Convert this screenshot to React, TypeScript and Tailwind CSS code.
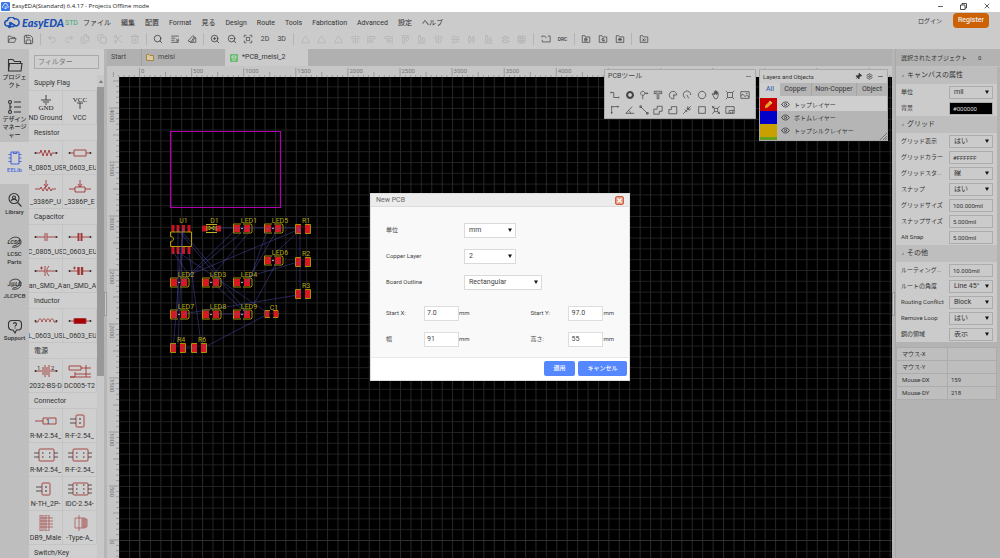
import React from "react";
import {
  AlignCenterHorizontal,
  AlignCenterVertical,
  AlignEndHorizontal,
  AlignEndVertical,
  AlignHorizontalDistributeCenter,
  AlignStartHorizontal,
  AlignStartVertical,
  AlignVerticalDistributeCenter,
  Copy,
  Eye,
  Files,
  Grid3x3,
  Minus,
  Pin,
  Redo2,
  Save,
  Scissors,
  Search,
  Settings,
  Trash2,
  Triangle,
  Undo2,
  X,
  ZoomIn,
  ZoomOut,
} from "lucide-react";

/* ---------- data ---------- */

const MENUS = ["ファイル", "編集", "配置", "Format", "見る", "Design", "Route", "Tools", "Fabrication", "Advanced", "設定", "ヘルプ"];

const PATHS = {
  open: "M3 20V5h6l2 3h8v3M3 20h15l4-9H7z",
  list: "M3 5h18M3 10h9M3 15h8M3 20h18M14 11l6 6M20 11v6h-6",
  theme: "M3 16L14 4l7 5v11H9zM9 20l8-13M13 20l6-12M3 16l6 4",
  fit: "M3 8V3h5M16 3h5v5M21 16v5h-5M8 21H3v-5M8 8h8v8H8z",
  route: "M2 8V5h7l4 5M22 5v14H3v-5M16 5h6",
  fileB: "M3 20V4h6l2 3h10v13zM9 10h5v7H9zM9 13h6",
  fileG: "M3 20V4h6l2 3h10v13zM15 11l-3-1-3 3 3 4 3-1v-2M10 10l5 7",
  fileA: "M3 20V4h6l2 3h10v13zM7 13h10M12 9v8M9 10l6 6M15 10l-6 6",
  fileD: "M3 20V4h6l2 3h10v13zM8 11l8 6M8 16h3v-4M14 11l3 3",
  track: "M2 6h7v12h12M2 4v4M21 16v4",
  via: "M12 5a7 7 0 1 0 .1 0z",
  pad: "M9 3a5 5 0 1 0 .1 0zM9 13v9M14 8h8M19 6v4",
  text: "M3 3h18v6h-3V7h-4v14h-4V7H6v2H3z",
  arcA: "M12 12h9a9 9 0 1 0-7 9v-9",
  arcB: "M5 17a9 9 0 1 1 16-5M12 12l4 8M5 17l3 3",
  circle: "M12 3a9 9 0 1 0 .1 0z",
  hand: "M5 13L3 9l2-1 3 4V4h2v6V2h2v8V3h2v8l1-6 2 1v9l-3 6H9z",
  dimension: "M6 6h12v12H6zM2 2l4 4M22 2l-4 4M2 22l4-4M22 22l-4-4",
  image: "M2 4h20v16H2zM2 14l5-4 5 6 4-4 6 5M14 8h4",
  origin: "M4 22V4h18M4 2v4M18 2v4M2 18h4",
  angle: "M22 20H2L17 4M9 13a9 9 0 0 1 4 7",
  link: "M4 4l16 16M2 2h4v4H2zM18 18h4v4h-4z",
  copper: "M2 10h8V3h12v12h-7v7H2z",
  solid: "M2 21V11h6V4h13v17z",
  rat: "M3 21l18-18M7 11l6 6M11 7l6 6M14 3v7h7",
  square: "M4 4h16v16H4z",
  group: "M3 3l6 6M21 3l-6 6M3 21l6-6M21 21l-6-6M8 8h8v8H8zM4 8V4h4M20 16v4h-4",
  panel: "M2 4h20v16H2zM10 13h12M10 13v7M14 17v3M18 15v5",
};

type GlyphName = keyof typeof PATHS;

const PCB_TOOLS: GlyphName[] = [
  "track", "via", "pad", "text", "arcA", "arcB", "circle", "hand", "dimension", "image",
  "origin", "angle", "link", "copper", "solid", "rat", "square", "group", "panel",
];

const LIBRARY = [
  { title: "Supply Flag", items: [["gnd", "ND Ground"], ["vcc", "VCC"]] },
  { title: "Resistor", items: [["resUS", "R_0805_US"], ["resEU", "R_0603_EU"], ["potUS", "_3386P_U"], ["potEU", "_3386P_E"]] },
  { title: "Capacitor", items: [["cap", "C_0805_US"], ["capEU", "C_0603_EU"], ["polUS", "an_SMD_A"], ["polEU", "an_SMD_A"]] },
  { title: "Inductor", items: [["indUS", "L_0603_US"], ["indEU", "L_0603_EU"]] },
  { title: "電源", items: [["battery", "2032-BS-D"], ["jack", "DC005-T2"]] },
  {
    title: "Connector",
    items: [
      ["pin", "R-M-2.54_"], ["two", "R-F-2.54_"], ["four", "R-M-2.54_"], ["four", "R-F-2.54_"],
      ["two", "N-TH_2P-"], ["six", "IDC-2.54-"], ["db9", "DB9_Male"], ["usb", "-Type-A_"],
    ],
  },
  { title: "Switch/Key", items: [] },
];

const MODULES = [
  ["project", "プロジェクト"],
  ["design", "デザインマネージャー"],
  ["eelib", "EELib"],
  ["library", "Library"],
  ["lcsc", "LCSC Parts"],
  ["jlc", "JLCPCB"],
  ["support", "Support"],
];

const PROPS = [
  {
    title: "キャンバスの属性",
    rows: [["単位", "mil", "select"], ["背景", "#000000", "dark"]],
  },
  {
    title: "グリッド",
    rows: [
      ["グリッド表示", "はい", "select"],
      ["グリッドカラー", "#FFFFFF", "input"],
      ["グリッドスタ...", "線", "select"],
      ["スナップ", "はい", "select"],
      ["グリッドサイズ", "100.000mil", "input"],
      ["スナップサイズ", "5.000mil", "input"],
      ["Alt Snap", "5.000mil", "input"],
    ],
  },
  {
    title: "その他",
    rows: [
      ["ルーティング...", "10.000mil", "input"],
      ["ルートの角度", "Line 45°", "select"],
      ["Routing Conflict", "Block", "select"],
      ["Remove Loop", "はい", "select"],
      ["銅の領域", "表示", "select"],
    ],
  },
];

/* ---------- small parts ---------- */

function Glyph({ name, size = 10, bold = false }: { name: GlyphName; size?: number; bold?: boolean }) {
  return (
    <svg width={size} height={size} viewBox="0 0 24 24" fill="none" stroke="currentColor" strokeWidth={bold ? 5 : 1.8} aria-hidden="true">
      <path d={PATHS[name]} />
    </svg>
  );
}

function Select({ id, value, className = "" }: { id: string; value: string; className?: string }) {
  return (
    <span className={`relative block ${className}`}>
      <select id={id} defaultValue={value} className="block h-full w-full appearance-none border border-current/20 bg-transparent pl-1 text-[7px] leading-none">
        <option>{value}</option>
      </select>
      <svg className="pointer-events-none absolute top-1/2 right-1 -translate-y-1/2" width="4" height="4" viewBox="0 0 4 4">
        <path d="M0 0.5h4L2 4z" fill="#111" />
      </svg>
    </span>
  );
}

/* ---------- header ---------- */

function TitleBar() {
  return (
    <div className="flex h-3 items-center bg-white pl-px text-[6px] text-[#222]">
      <svg width="9" height="9" viewBox="0 0 18 18">
        <rect width="18" height="18" rx="2" fill="#3b78e7" />
        <path d="M4 12a3 3 0 0 1 1-5 4 4 0 0 1 8 0 3 3 0 0 1 0 5M7 10h5M7 13h4" stroke="#fff" strokeWidth="1.6" fill="none" />
      </svg>
      <h1 className="ml-0.5 font-['Open_Sans']">EasyEDA(Standard) 6.4.17 - Projects Offline mode</h1>
      <div className="ml-auto flex items-center gap-4 pr-[9px]">
        <button aria-label="Minimize"><Minus size={7} strokeWidth={2.5} /></button>
        <button aria-label="Restore">
          <svg width="7" height="7" viewBox="0 0 14 14" fill="none" stroke="#222" strokeWidth="1.6"><path d="M1 4h9v9H1zM4 4V1h9v9h-3" /></svg>
        </button>
        <button aria-label="Close"><X size={8} strokeWidth={2.2} /></button>
      </div>
    </div>
  );
}

function Logo() {
  return (
    <a href="#home" className="flex w-[79px] shrink-0 items-center pl-1" aria-label="EasyEDA STD">
      <svg width="16" height="12" viewBox="0 0 32 24" fill="none" stroke="#1a4fb4" strokeWidth="3">
        <path d="M9 18H7a5.5 5.5 0 0 1 0-11 7.5 7.5 0 0 1 14-3 7 7 0 0 1 4 14c-5 0-6-5-10-5" />
        <circle cx="13" cy="13" r="2" />
        <circle cx="11" cy="19" r="2" />
        <path d="M13 19h6l3-3" />
      </svg>
      <span className="ml-0.5 pb-0.5 font-['Lato'] text-[11px] leading-none font-black text-[#1a4fb4] italic">EasyEDA</span>
      <span className="ml-px text-[7px] text-[#3da672]">STD</span>
    </a>
  );
}

function ToolGroup({ className, muted = false, children }: { className: string; muted?: boolean; children: React.ReactNode }) {
  return (
    <div className={`flex ${className} ${muted ? "text-[#b2b2b2]" : "text-[#444]"}`}>
      {React.Children.map(children, (child) => (
        <button className="flex flex-1 items-center justify-center">{child}</button>
      ))}
    </div>
  );
}

function Separator() {
  return <div className="flex w-[7px] justify-center"><span className="h-full w-px bg-[#b4b4b4]" /></div>;
}

function Header() {
  return (
    <header className="flex h-[37px] items-start justify-between bg-[#cbcbcb] pt-px text-[#333]">
      <div>
        <div className="flex h-5 items-center">
          <Logo />
          <nav className="flex gap-[10px] pl-1 text-[7px] whitespace-nowrap">
            {MENUS.map((menu) => (
              <button key={menu}>{menu}</button>
            ))}
          </nav>
        </div>
        <div className="flex h-3 pl-[3px]">
          <ToolGroup className="w-[34px]">
            <Glyph name="open" />
            <Save size={11} strokeWidth={1.8} />
          </ToolGroup>
          <Separator />
          <ToolGroup className="w-[99px]" muted>
            <Undo2 size={10} />
            <Redo2 size={10} />
            <Files size={10} />
            <Copy size={10} />
            <Scissors size={10} />
            <Trash2 size={10} />
          </ToolGroup>
          <Separator />
          <ToolGroup className="w-[50px]">
            <Search size={10} />
            <Glyph name="list" />
            <Glyph name="theme" />
          </ToolGroup>
          <Separator />
          <ToolGroup className="w-[83px]">
            <ZoomIn size={10} />
            <ZoomOut size={10} />
            <Glyph name="fit" />
            <span className="text-[7px]">2D</span>
            <span className="text-[7px]">3D</span>
          </ToolGroup>
          <Separator />
          <ToolGroup className="w-[233px]" muted>
            <Triangle size={9} />
            <Triangle size={9} />
            <Triangle size={9} />
            <AlignCenterVertical size={9} />
            <AlignStartVertical size={9} />
            <AlignEndVertical size={9} />
            <AlignStartHorizontal size={9} />
            <AlignEndHorizontal size={9} />
            <AlignCenterVertical size={9} />
            <AlignCenterHorizontal size={9} />
            <AlignHorizontalDistributeCenter size={9} />
            <AlignEndHorizontal size={9} />
            <AlignVerticalDistributeCenter size={9} />
            <Grid3x3 size={9} />
          </ToolGroup>
          <Separator />
          <ToolGroup className="w-[34px]">
            <Glyph name="route" />
            <span className="text-[5px] font-medium">DRC</span>
          </ToolGroup>
          <Separator />
          <ToolGroup className="w-[50px]">
            <Glyph name="fileB" />
            <Glyph name="fileG" />
            <Glyph name="fileA" />
          </ToolGroup>
          <Separator />
          <ToolGroup className="w-[17px]">
            <Glyph name="fileD" />
          </ToolGroup>
        </div>
      </div>
      <div className="flex items-center gap-[11px] pr-[11px] text-[6px]">
        <a href="#login">ログイン</a>
        <a href="#register" className="flex h-[15px] items-center rounded-sm bg-[#cc6105] px-[5px] text-[7px] font-medium text-[#eee]">Register</a>
      </div>
    </header>
  );
}

/* ---------- left side ---------- */

function ModuleIcon({ name }: { name: string }) {
  const common = { width: 16, height: 16, viewBox: "0 0 32 32", fill: "none", stroke: "currentColor", strokeWidth: 2.2 };
  switch (name) {
    case "project":
      return <svg {...common}><path d="M3 28V5h9l3 4h12v4M3 28h25l2-15H5z" /></svg>;
    case "design":
      return <svg {...common}><circle cx="6" cy="6" r="3" /><circle cx="6" cy="26" r="3" /><path d="M6 9v14M6 16h4M14 6h14M14 16h14M14 26h14" /></svg>;
    case "eelib":
      return <svg {...common}><rect x="8" y="4" width="16" height="24" rx="1" /><path d="M8 9H3M8 16H3M8 23H3M29 9h-5M29 16h-5M29 23h-5M13 4v3h6V4" /></svg>;
    case "library":
      return <svg {...common}><circle cx="14" cy="13" r="10" /><circle cx="14" cy="11" r="3" /><path d="M8 18c2-5 10-5 12 0M21 21l8 8" /></svg>;
    case "support":
      return <svg {...common}><path d="M16 30l-4-6h-3a7 7 0 0 1-6-7v-5a7 7 0 0 1 7-7h12a7 7 0 0 1 7 7v5a7 7 0 0 1-7 7h-3z" /><path d="M13 12a3 3 0 1 1 4 3l-1 2M16 19v2" /></svg>;
    default:
      return (
        <svg {...common} strokeWidth="1.8">
          <path d="M5 12C12 3 27 5 28 15c1 8-8 13-18 11M24 9c5 7-2 14-12 15" />
          <text x="1" y="20" fontSize="11" fontStyle="italic" fontWeight="bold" fill="currentColor" stroke="none">{name === "lcsc" ? "LCSC" : "J@LC"}</text>
        </svg>
      );
  }
}

function ModuleBar() {
  return (
    <nav className="w-[29px] shrink-0 bg-[#bebebe]">
      {MODULES.map(([name, label]) => (
        <button
          key={name}
          className={`flex w-full flex-col items-center pt-2 text-center text-[6px] leading-2 font-medium ${name === "design" ? "h-[51px]" : "h-[42px]"} ${
            name === "eelib" ? "bg-[#cfcfcf] text-[#4a68d8]" : "text-[#333]"
          }`}
        >
          <ModuleIcon name={name} />
          <span className="w-full">{label}</span>
        </button>
      ))}
    </nav>
  );
}

function Leads() {
  return (
    <g fill="#333" stroke="none">
      <circle cx="1.5" cy="8" r="1" />
      <circle cx="22.5" cy="8" r="1" />
    </g>
  );
}

function BoxPart({ rows, both = false }: { rows: number; both?: boolean }) {
  const ys = rows === 2 ? [6, 10] : [4, 8, 12];
  return (
    <>
      <rect x={both ? 5 : 8} y="2" width={both ? 15 : 8} height="12" rx="1" />
      {ys.map((y) => (
        <g key={y} stroke="#333" strokeWidth="0.8">
          <path d={both ? `M0 ${y}h5M20 ${y}h5` : `M2 ${y}h6`} />
          <path d={both ? `M8 ${y}h1.5M15 ${y}h1.5` : `M11 ${y}h2`} strokeWidth="1.2" />
        </g>
      ))}
    </>
  );
}

function PartSymbol({ name }: { name: string }) {
  const body = {
    gnd: <g stroke="#333"><path d="M12 0v5M7 5h10M9 7h6M11 9h2" /><text x="12" y="15" fontSize="7" textAnchor="middle" fill="#222" stroke="none" fontFamily="Liberation Serif">GND</text></g>,
    vcc: <g stroke="#333"><text x="12" y="7" fontSize="7" textAnchor="middle" fill="#222" stroke="none" fontFamily="Liberation Serif">VCC</text><path d="M9 8h6M12 8v6" /></g>,
    resUS: <><path d="M1 8h5l1-3 2 6 2-6 2 6 2-6 2 6 1-3h4" /><Leads /></>,
    resEU: <><path d="M1 8h5M18 8h5M6 5h12v6H6z" /><Leads /></>,
    potUS: <><path d="M1 10h5l1-2 2 4 2-4 2 4 2-4 2 4 1-2h4M12 1v7M10 5l2 3 2-3" /></>,
    potEU: <><path d="M1 10h6M17 10h6M7 8h10v5H7zM12 1v7M10 5l2 3 2-3" /></>,
    cap: <><path d="M1 8h10M13 8h10M11 4v8M13 4v8" /><Leads /></>,
    capEU: <><path d="M1 8h9M14 8h9" /><path d="M10.5 4v8M13.5 4v8" strokeWidth="2" /><Leads /></>,
    polUS: <><path d="M1 8h10M13 8h10M11 3v10M15 3c-3 3-3 7 0 10M6 5h3M7.5 3.5v3" /><Leads /></>,
    polEU: <><path d="M1 8h9M15 8h8M5 5h3M6.5 3.5v3" /><path d="M10.5 4v8M14 4v8" strokeWidth="2.4" /><Leads /></>,
    indUS: <><path d="M1 9h3c0-4 4-4 4 0 0-4 4-4 4 0 0-4 4-4 4 0 0-4 4-4 4 0h3" /><Leads /></>,
    indEU: <><path d="M1 8h22" /><path d="M6 5.5h12v5H6z" fill="#a00" /><Leads /></>,
    battery: <><path d="M1 8h7M16 8h7M9 4v8M11 2v12M13 4v8M15 2v12" /><text x="3" y="7" fontSize="6" fill="#333" stroke="none">1</text><text x="17" y="7" fontSize="6" fill="#333" stroke="none">2</text><Leads /></>,
    jack: <><path d="M1 3h12v4H1zM13 5h10M7 9v5H2M7 11h16M2 14h21M18 2v12" /></>,
    pin: <><path d="M1 8h8M9 5h13v6H9z" /><text x="12" y="10.5" fontSize="7" fill="#222" stroke="none">1</text></>,
    two: <BoxPart rows={2} />,
    four: <BoxPart rows={2} both />,
    six: <BoxPart rows={3} both />,
    db9: <g strokeWidth="0.6"><path d="M6 0h9v16H6zM8 0v16M10 1v14M12 0v16M6 3h13M6 6h13M6 9h13M6 12h13" /></g>,
    usb: <g strokeWidth="0.6"><path d="M7 3h10v10H7zM11 0v16M13 4h6v8h-6M13 6h6M13 8h6M13 10h6M15 4v8" /></g>,
  }[name];
  return (
    <svg width="24" height="16" viewBox="0 0 24 16" fill="none" stroke="#a03838" strokeWidth="0.9" className="shrink-0">
      {body}
    </svg>
  );
}

function LibraryPanel() {
  return (
    <aside className="flex w-[75px] shrink-0 flex-col bg-[#cfcfcf] text-[7px] text-[#333]">
      <div className="h-[26px] shrink-0 px-[5px] pt-[6px]">
        <input aria-label="フィルター" placeholder="フィルター" className="block h-[14px] w-full border border-[#aaa] px-[3px] text-[7px] placeholder:text-[#777]" />
      </div>
      <div className="flex min-h-0 flex-1 overflow-hidden">
        <div className="min-w-0 flex-1">
          {LIBRARY.map((section) => (
            <section key={section.title}>
              <h2 className="h-4 border-b border-[#c4c4c4] pl-[5px] leading-4">{section.title}</h2>
              <ul className="grid grid-cols-2">
                {section.items.map(([symbol, label], i) => (
                  <li key={i} className="flex h-[34px] flex-col items-center overflow-hidden border-r border-b border-[#c4c4c4] pt-1 leading-[14px] whitespace-nowrap">
                    <PartSymbol name={symbol} />
                    {label}
                  </li>
                ))}
              </ul>
            </section>
          ))}
        </div>
        <div className="flex w-[7px] flex-col items-center bg-[#c8c8c8]">
          <span className="flex h-3 items-center">
            <svg width="4" height="3" viewBox="0 0 4 3"><path d="M0 3l2-3 2 3z" fill="#777" /></svg>
          </span>
          <span className="h-[289px] w-full bg-[#989898]" />
        </div>
      </div>
    </aside>
  );
}

function Splitter() {
  return (
    <div className="flex w-[3px] shrink-0 items-center justify-center bg-[#b6b6b6]">
      <span className="h-6 w-full border border-[#999] bg-[#ccc]" />
    </div>
  );
}

/* ---------- editor ---------- */

const GRID_X = 52.1;
const GRID_Y = 54;

function TopRuler() {
  return (
    <svg className="block h-[11px] w-full bg-[#c6c6c6]" stroke="#888" strokeWidth="0.7">
      {Array.from({ length: 160 }, (_, i) => {
        const x = 32.5 + (i - 5) * (GRID_X / 10);
        const major = (i - 5) % 10 === 0;
        return <path key={i} d={`M${x} 11V${major ? 2 : (i - 5) % 5 === 0 ? 6 : 9}`} />;
      })}
      {Array.from({ length: 16 }, (_, i) => (
        <text key={i} x={34 + i * GRID_X} y="7" fontSize="6" fill="#777" stroke="none">{i * 500}</text>
      ))}
    </svg>
  );
}

function SideRuler() {
  return (
    <svg className="block h-full w-3 shrink-0 bg-[#c6c6c6]" stroke="#888" strokeWidth="0.7">
      {Array.from({ length: 92 }, (_, i) => {
        const step = 86 - i;
        const y = 463 - step * (GRID_Y / 10);
        return <path key={i} d={`M12 ${y}H${step % 10 === 0 ? 2 : step % 5 === 0 ? 6 : 9}`} />;
      })}
      {Array.from({ length: 9 }, (_, i) => (
        <text key={i} transform={`translate(3 ${464 - i * GRID_Y}) rotate(90)`} fontSize="6" fill="#777" stroke="none">{i * 500}</text>
      ))}
    </svg>
  );
}

const LEDS = [
  ["LED1", 242, 228], ["LED5", 273, 228], ["LED6", 273, 260], ["LED2", 179, 282], ["LED3", 211, 282],
  ["LED4", 242, 282], ["LED7", 179, 314], ["LED8", 211, 314], ["LED9", 242, 314],
] as const;

const RESISTORS = [["R1", 303, 229], ["R2", 303, 262], ["R3", 303, 294], ["R4", 178, 348], ["R6", 199, 348]] as const;

const NETS = [
  [189, 252, 201, 344], [178, 228, 178, 312], [183, 228, 178, 344], [178, 230, 247, 312], [183, 233, 220, 275],
  [178, 252, 268, 313], [173, 252, 189, 275], [247, 228, 182, 282], [237, 228, 189, 275], [300, 229, 189, 275],
  [250, 231, 212, 276], [212, 282, 247, 314], [278, 228, 247, 282], [268, 260, 300, 230], [278, 260, 253, 306],
  [298, 262, 247, 277], [298, 295, 183, 314], [268, 314, 203, 348], [212, 228, 300, 228], [300, 229, 300, 294],
  [215, 314, 247, 314], [181, 348, 196, 348], [173, 350, 183, 228], [268, 228, 249, 282],
];

function Board() {
  return (
    <svg className="block h-full min-w-0 flex-1 bg-black">
      <defs>
        <pattern id="grid" x="20.5" y="31" width={GRID_X / 5} height={GRID_Y / 5} patternUnits="userSpaceOnUse">
          <path d={`M0 .5H${GRID_X / 5}`} stroke="#202020" />
          <path d={`M.5 0V${GRID_Y / 5}`} stroke="#262626" />
        </pattern>
      </defs>
      <rect width="100%" height="100%" fill="url(#grid)" />
      <path d="M20.500 0V2000M0 463.500H3000" stroke="#303030" />
      <g transform="translate(-119 -77)" fontSize="7">
        <path d="M170.500 131.500h110v76h-110z" fill="none" stroke="#b000b0" strokeWidth="1.2" />

        <g fill="#c8141c">
          {[173, 178, 183.5, 189].map((x) => (
            <path key={x} d={`M${x - 1.5} 225h3v7h-3zM${x - 1.5} 247h3v7h-3z`} />
          ))}
          <path d="M202 225.500h5v6h-5zM216 225.500h5v6h-5z" />
        </g>
        <path d="M170.500 232h21v14.500h-21v-5c4 0 4-5 0-5z" fill="none" stroke="#b5a000" />
        <path d="M206 224.500h11M206 232.500h11M207 226v5M216 226v5M209 226l5 4M209 230l5-4M209 226v4M214 226v4" stroke="#c5b020" fill="none" />

        {LEDS.map(([name, x, y]) => (
          <g key={name}>
            <path d={`M${x - 1} ${y - 4}h-7.500v9h7.500M${x + 1} ${y - 4}h8l1 1v7l-1 1h-8`} fill="none" stroke="#a89200" />
            <path d={`M${x - 8} ${y - 3}h6v7h-6zM${x + 2} ${y - 3}h6v7h-6z`} fill="#d81820" />
            <circle cx={x} cy={y + 0.5} r="0.8" fill="#ddd" />
          </g>
        ))}
        {RESISTORS.map(([name, x, y]) => (
          <g key={name}>
            <path d={`M${x - 2} ${y - 4.5}h-5.500v9h5.500M${x + 2} ${y - 4.5}h5.500v9h-5.500`} fill="none" stroke="#a89200" />
            <path d={`M${x - 7} ${y - 4}h5v8h-5zM${x + 2} ${y - 4}h5v8h-5z`} fill="#d81820" />
          </g>
        ))}
        <path d="M270 310.500h-5v7h5M273 310.500h5v7h-5" fill="none" stroke="#a89200" />
        <path d="M265 311h4.500v6h-4.500zM273.500 311h4.500v6h-4.500z" fill="#d81820" />

        <g stroke="#5a5ad0" strokeOpacity="0.45" strokeWidth="0.9">
          {NETS.map(([x1, y1, x2, y2], i) => (
            <path key={i} d={`M${x1} ${y1}L${x2} ${y2}`} />
          ))}
        </g>

        <g fill="#b5ac12" textAnchor="middle">
          <text x="183.500" y="223">U1</text>
          <text x="214.500" y="223">D1</text>
          <text x="274" y="310">C1</text>
          {LEDS.map(([name, x, y]) => <text key={name} x={x + 7} y={y - 5}>{name}</text>)}
          {RESISTORS.map(([name, x, y]) => <text key={name} x={x + 3} y={y - 6}>{name}</text>)}
        </g>
      </g>
    </svg>
  );
}

function PcbTools() {
  return (
    <section className="absolute top-5 right-[136px] h-[50px] w-[152px] border border-[#aaa] bg-[#cbcbcb] text-[#444]">
      <header className="flex h-3 items-center justify-between px-[3px] text-[7px]">
        <h2>PCBツール</h2>
        <button aria-label="Collapse"><Minus size={7} /></button>
      </header>
      <div className="grid grid-cols-10 px-[3px] pt-[5px]">
        {PCB_TOOLS.map((tool) => (
          <button key={tool} aria-label={tool} className="flex h-[15px] items-center justify-center">
            <Glyph name={tool} bold={tool === "via"} />
          </button>
        ))}
      </div>
    </section>
  );
}

function LayersPanel() {
  return (
    <section className="absolute top-5 right-1 w-[129px] border border-[#aaa] bg-[#b5b5b5] text-[#333]">
      <header className="flex h-[13px] items-center gap-1 bg-[#cbcbcb] px-[3px] text-[6px]">
        <h2 className="mr-auto">Layers and Objects</h2>
        <Pin size={7} fill="#333" className="rotate-45" />
        <Settings size={7} />
        <Minus size={7} />
      </header>
      <div className="flex h-[13px] text-[7px]">
        <button className="w-5 bg-[#cfcfcf] text-[#2a55a0]">All</button>
        <button className="w-8 border-r border-[#a5a5a5]">Copper</button>
        <button className="w-[45px] border-r border-[#a5a5a5]">Non-Copper</button>
        <button className="flex-1">Object</button>
      </div>
      <ul className="border-t-2 border-[#cfcfcf] text-[6px]">
        <li className="flex h-[13px] items-center bg-[#cfcfcf]">
          <span className="flex h-full w-[17px] items-center justify-center bg-[#c80000]">
            <svg width="9" height="9" viewBox="0 0 12 12"><path d="M1 11l1-4 6-6 3 3-6 6z" fill="#e6a628" /><path d="M7 2l3 3 1-1-3-3z" fill="#e8c8c0" /></svg>
          </span>
          <Eye size={9} className="mx-1" />トップレイヤー
        </li>
        <li className="flex h-[13px] items-center">
          <span className="h-full w-[17px] bg-[#0000c8]" />
          <Eye size={9} className="mx-1" />ボトムレイヤー
        </li>
        <li className="flex h-[13px] items-center">
          <span className="h-full w-[17px] bg-[#c8a000]" />
          <Eye size={9} className="mx-1" />トップシルクレイヤー
        </li>
        <li className="flex h-[3px] items-end justify-between">
          <span className="h-full w-[17px] bg-[#66a020]" />
          <svg width="7" height="7" viewBox="0 0 7 7" stroke="#666" strokeWidth="0.8"><path d="M0 7l7-7M3 7l4-4M5 7l2-2" /></svg>
        </li>
      </ul>
    </section>
  );
}

function Editor() {
  return (
    <main className="relative flex min-w-0 flex-1 flex-col">
      <div className="flex h-[17px] shrink-0 bg-[#b0b0b0] text-[7px] text-[#444]">
        <button className="w-[35px] border-r border-[#a0a0a0] pl-1 text-left">Start</button>
        <button className="flex w-[83px] items-center gap-1 pl-1">
          <svg width="8" height="7" viewBox="0 0 8 7"><path d="M.5 6.500v-6H3l1 1h3.500v5z" fill="#d8cba4" stroke="#a8843c" /></svg>
          meisi
        </button>
        <button className="flex w-[83px] items-center gap-1 bg-[#cbcbcb] pl-[5px] text-[#333]">
          <svg width="8" height="8" viewBox="0 0 8 8"><rect width="8" height="8" rx="1" fill="#6cba70" /><path d="M2 2h4v2H2zM2 6h4" stroke="#d8ead8" strokeWidth=".7" fill="none" /></svg>
          *PCB_meisi_2
        </button>
      </div>
      <TopRuler />
      <div className="flex min-h-0 flex-1">
        <SideRuler />
        <Board />
      </div>
      <PcbTools />
      <LayersPanel />
    </main>
  );
}

/* ---------- right side ---------- */

function PropertyPanel() {
  return (
    <aside className="w-[105px] shrink-0 border-l border-[#a8a8a8] bg-[#b3b3b3] text-[6px] text-[#333]">
      <div className="flex h-[18px] items-center gap-[11px] border-b border-[#c0c0c0] pl-[5px]">
        <h2>選択されたオブジェクト</h2>
        <span>0</span>
      </div>
      {PROPS.map((group) => (
        <section key={group.title} className="mr-[3px] bg-[#cbcbcb]">
          <h3 className="flex h-[17px] items-center gap-[3px] bg-[#bebebe] pl-[5px] text-[7px]">
            <svg width="3" height="3" viewBox="0 0 3 3"><path d="M3 0v3H0z" fill="#999" /></svg>
            {group.title}
          </h3>
          {group.rows.map(([label, value, kind]) => (
            <div key={label} className="flex h-4 items-center pr-1 pl-[5px]">
              <label htmlFor={label} className="w-[45px] whitespace-nowrap">{label}</label>
              {kind === "select" ? (
                <Select id={label} value={value} className="ml-[3px] h-[13px] flex-1" />
              ) : (
                <input
                  id={label}
                  defaultValue={value}
                  className={`ml-[3px] h-[13px] min-w-0 flex-1 border border-[#adadad] px-[3px] ${kind === "dark" ? "bg-black text-[#ddd]" : ""}`}
                />
              )}
            </div>
          ))}
        </section>
      ))}
      <table className="mt-[5px] w-[101px] border-collapse bg-[#bebebe] text-left">
        <tbody>
          {[["マウス-X", ""], ["マウス-Y", ""], ["Mouse-DX", "159"], ["Mouse-DY", "218"]].map(([name, value]) => (
            <tr key={name} className="h-[13px] border border-[#acacac]">
              <th className="w-[51px] border-r border-[#acacac] pl-[5px] font-normal">{name}</th>
              <td className="pl-[3px]">{value}</td>
            </tr>
          ))}
        </tbody>
      </table>
    </aside>
  );
}

/* ---------- dialog ---------- */

function NumberField({ id, label, value, className = "" }: { id: string; label: string; value: string; className?: string }) {
  return (
    <div className={`flex items-center ${className}`}>
      <label htmlFor={id} className="w-[38px]">{label}</label>
      <input id={id} defaultValue={value} className="h-[15px] w-[35px] border border-[#ddd] bg-white px-0.5 text-[7px]" />
      <span>mm</span>
    </div>
  );
}

function NewPcbDialog() {
  return (
    <div className="fixed inset-0 flex items-start justify-center pt-[193px]">
      <div role="dialog" aria-label="New PCB" className="w-[260px] border border-[#ddd] bg-[#f9f9f9] text-[6px] text-[#444]">
        <header className="flex h-[13px] items-center justify-between border-b border-[#ddd] bg-[#ececec] px-[5px] text-[7px] text-[#666]">
          <h2>New PCB</h2>
          <button aria-label="Close" className="flex h-[9px] w-[9px] items-center justify-center rounded-xs border border-[#c9603f] bg-[#e39a80] text-white"><X size={7} strokeWidth={4} /></button>
        </header>
        <form className="px-[15px] pt-[10px] pb-[5px]">
          <div className="flex h-[26px] items-center">
            <label htmlFor="unit" className="w-[78px]">単位</label>
            <Select id="unit" value="mm" className="h-[15px] w-[52px] bg-white" />
          </div>
          <div className="flex h-[26px] items-center">
            <label htmlFor="layer" className="w-[78px]">Copper Layer</label>
            <Select id="layer" value="2" className="h-[15px] w-[52px] bg-white" />
          </div>
          <div className="flex h-[26px] items-center">
            <label htmlFor="outline" className="w-[78px]">Board Outline</label>
            <Select id="outline" value="Rectangular" className="h-[15px] w-[78px] bg-white" />
          </div>
          <div className="mt-[5px] flex h-[26px]">
            <NumberField id="startX" label="Start X:" value="7.0" className="w-[145px]" />
            <NumberField id="startY" label="Start Y:" value="97.0" />
          </div>
          <div className="flex h-[26px]">
            <NumberField id="width" label="幅" value="91" className="w-[145px]" />
            <NumberField id="height" label="高さ:" value="55" />
          </div>
        </form>
        <footer className="flex h-[23px] items-center justify-end gap-[3px] border-t border-[#e8e8e8] bg-white pr-0.5 pb-0.5 text-[6px] font-medium text-white">
          <button className="h-[15px] w-[31px] rounded-xs bg-[#5588ff]">適用</button>
          <button className="h-[15px] w-[49px] rounded-xs bg-[#5588ff]">キャンセル</button>
        </footer>
      </div>
    </div>
  );
}

export default function App() {
  return (
    <div className="flex h-screen flex-col overflow-hidden bg-[#cbcbcb] font-['Roboto','Noto_Sans_CJK_JP',sans-serif] leading-none">
      <TitleBar />
      <Header />
      <div className="flex min-h-0 flex-1">
        <ModuleBar />
        <LibraryPanel />
        <Splitter />
        <Editor />
        <Splitter />
        <PropertyPanel />
      </div>
      <NewPcbDialog />
    </div>
  );
}
